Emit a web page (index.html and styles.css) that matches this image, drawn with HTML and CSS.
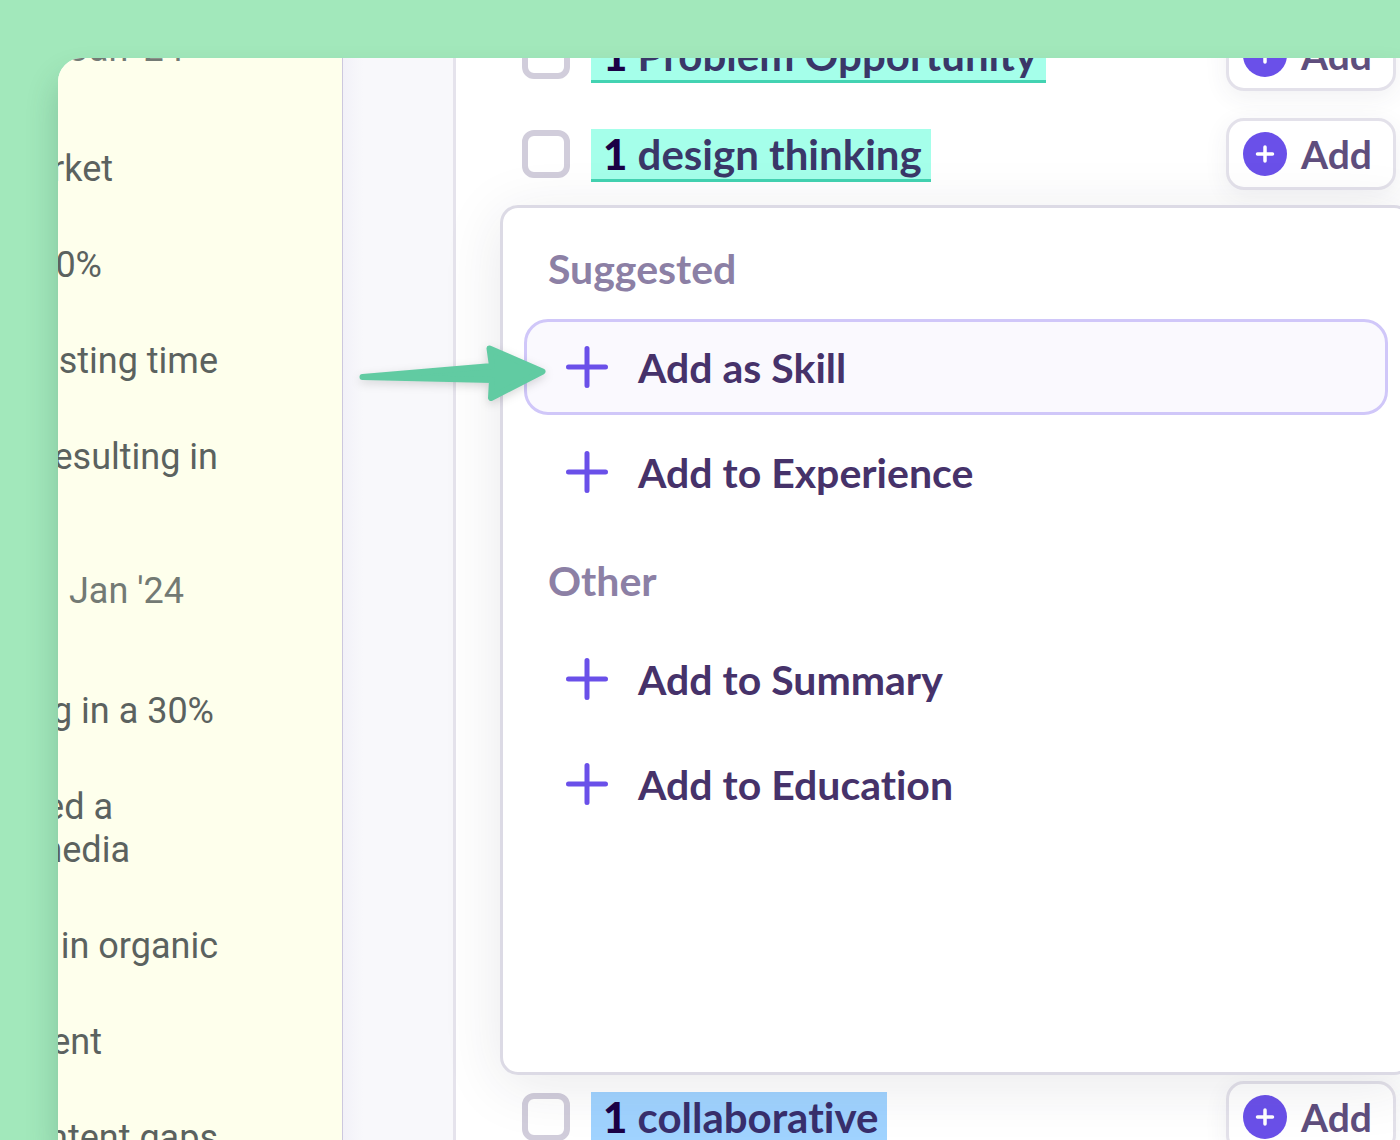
FILE: index.html
```
<!DOCTYPE html>
<html lang="en">
<head>
    <meta charset="UTF-8">
    <title>Resume keywords</title>
    <link rel="stylesheet" href="styles.css">
</head>
<body>
    <main class="frame">
        <!-- Resume preview -->
        <section class="resume">
            <p class="line date end-date">Jan '24</p>
            <ul class="bullets">
                <li class="line end-word">rket</li>
                <li class="line end-short">0%</li>
                <li class="line">sting time</li>
                <li class="line">esulting in</li>
            </ul>
            <p class="line date end-date">Jan '24</p>
            <ul class="bullets">
                <li class="line end-percent">g in a 30%</li>
                <li>
                    <span class="line end-word">ed a</span>
                    <span class="line end-media">media</span>
                </li>
                <li class="line">in organic</li>
                <li class="line end-short">ent</li>
                <li class="line">ntent gaps</li>
            </ul>
        </section>

        <div class="gutter"></div>

        <!-- Keyword list -->
        <section class="keywords">
            <div class="keyword-row">
                <input type="checkbox" id="kw-problem" class="check">
                <label for="kw-problem" class="keyword"><b>1</b> Problem Opportunity</label>
                <button type="button" class="add-button">
                    <svg class="add-icon" viewBox="0 0 44 44"><circle cx="22" cy="22" r="22"/><path d="M22 15v14M14.500 22h15"/></svg>
                    Add
                </button>
            </div>
            <div class="keyword-row">
                <input type="checkbox" id="kw-design" class="check">
                <label for="kw-design" class="keyword"><b>1</b> design thinking</label>
                <button type="button" class="add-button">
                    <svg class="add-icon" viewBox="0 0 44 44"><circle cx="22" cy="22" r="22"/><path d="M22 15v14M14.500 22h15"/></svg>
                    Add
                </button>
            </div>

            <!-- Add menu -->
            <div class="menu">
                <div class="menu-group">
                    <h2 class="menu-title">Suggested</h2>
                    <button type="button" class="menu-item active">
                        <svg class="plus" viewBox="0 0 42 42"><path d="M21 2.500v37M2.500 21h37"/></svg>
                        Add as Skill
                    </button>
                    <button type="button" class="menu-item">
                        <svg class="plus" viewBox="0 0 42 42"><path d="M21 2.500v37M2.500 21h37"/></svg>
                        Add to Experience
                    </button>
                </div>
                <div class="menu-group">
                    <h2 class="menu-title">Other</h2>
                    <button type="button" class="menu-item">
                        <svg class="plus" viewBox="0 0 42 42"><path d="M21 2.500v37M2.500 21h37"/></svg>
                        Add to Summary
                    </button>
                    <button type="button" class="menu-item">
                        <svg class="plus" viewBox="0 0 42 42"><path d="M21 2.500v37M2.500 21h37"/></svg>
                        Add to Education
                    </button>
                </div>
            </div>

            <div class="keyword-row">
                <input type="checkbox" id="kw-collab" class="check">
                <label for="kw-collab" class="keyword soft"><b>1</b> collaborative</label>
                <button type="button" class="add-button">
                    <svg class="add-icon" viewBox="0 0 44 44"><circle cx="22" cy="22" r="22"/><path d="M22 15v14M14.500 22h15"/></svg>
                    Add
                </button>
            </div>
        </section>

        <!-- Pointer to the first menu entry -->
        <svg class="arrow" viewBox="0 0 200 72" width="200" height="72">
            <path d="M9.500 37 L139 26 L136.500 8.500 L189.500 31.500 L138 58 L139 40 Z"/>
        </svg>
    </main>
</body>
</html>
```

FILE: styles.css
```
:root {
    --green: #a2e8bb;
    --arrow: #61cba2;
    --purple: #6a50e9;
    --ink: #46326a;
    --border: #dcdae5;
}

* {
    box-sizing: border-box;
}

body {
    margin: 0;
    height: 100vh;
    padding: 58px 0 0 58px;
    overflow: hidden;
    background: var(--green);
    font-family: Lato, sans-serif;
}

.frame {
    position: relative;
    display: flex;
    height: 100%;
    overflow: hidden;
    background: #fff;
    border-radius: 24px 0 0 0;
    box-shadow: 0 20px 32px rgba(30, 70, 60, 0.24);
}

/* Resume preview */
.resume {
    flex: 0 0 284px;
    margin-top: -30px;
    background: #feffec;
    color: #5b625f;
    font-family: Roboto, sans-serif;
    font-size: 36px;
    line-height: 43px;
}

.line {
    display: flex;
    justify-content: flex-end;
    width: 160px;
    margin: 0;
    white-space: nowrap;
}

.date {
    color: #737a74;
}

.bullets {
    display: flex;
    flex-direction: column;
    gap: 53px;
    margin: 77px 0 91px;
    padding: 0;
    list-style: none;
}

.end-percent { width: 156px; }
.end-date { width: 126px; }
.end-media { width: 72px; }
.end-word { width: 55px; }
.end-short { width: 44px; }

.gutter {
    flex: 0 0 111px;
    border-left: 1px solid #cdc8de;
    background: linear-gradient(to right, #f2f1f8, #f8f8fb 20px);
}

/* Keyword list */
.keywords {
    flex: 1;
    min-width: 0;
    margin-top: -39px;
    padding: 0 4px 0 66px;
    border-left: 3px solid #e5e3ec;
}

.keyword-row {
    display: flex;
    align-items: center;
    height: 72px;
}

.keyword-row + .keyword-row {
    margin-top: 27px;
}

.check {
    appearance: none;
    width: 48px;
    height: 48px;
    margin: 0 21px 0 0;
    border: 6px solid #d1cddb;
    border-radius: 12px;
    background: #fff;
}

.keyword,
.menu-item {
    font-feature-settings: "liga" 0, "clig" 0, "dlig" 0, "calt" 0, "ccmp" 0, "locl" 0;
}

.keyword {
    margin-top: 3px;
    padding: 0 9px 0 12px;
    border-bottom: 3px solid #43d3b2;
    background: #a5ffea;
    color: #3a3768;
    font-size: 42px;
    font-weight: 700;
    line-height: 50px;
    white-space: nowrap;
}

.keyword b {
    color: #1b0046;
    font-weight: 900;
}

.keyword.soft {
    border-color: #6bb2f0;
    background: #a0d3ff;
    color: #382f6c;
}

.add-button {
    display: flex;
    align-items: center;
    gap: 14px;
    width: 170px;
    height: 72px;
    margin-left: auto;
    padding: 0 14px;
    border: 3px solid #e3e1ea;
    border-radius: 18px;
    background: #fff;
    box-shadow: 0 6px 24px rgba(60, 50, 90, 0.07);
    color: #5f4e7d;
    font-family: inherit;
    font-size: 39px;
    font-weight: 700;
}

.add-icon {
    width: 44px;
    height: 44px;
    fill: var(--purple);
    stroke: none;
}

.add-icon path {
    stroke: #fff;
    stroke-width: 3.5;
    stroke-linecap: round;
}

/* Add menu */
.menu {
    position: relative;
    display: flex;
    flex-direction: column;
    gap: 36px;
    min-height: 870px;
    margin: 15px -16px 6px -22px;
    padding: 36px 21px;
    border: 3px solid var(--border);
    border-radius: 18px;
    background: #fff;
    box-shadow: 0 10px 60px rgba(40, 35, 60, 0.1);
}

.menu-group {
    display: flex;
    flex-direction: column;
    gap: 9px;
}

.menu-title {
    margin: 0 0 16px;
    padding-left: 24px;
    color: #8c80a5;
    font-size: 41px;
    font-weight: 700;
    line-height: 50px;
}

.menu-item {
    display: flex;
    align-items: center;
    gap: 30px;
    height: 96px;
    padding: 0 39px;
    border: 3px solid transparent;
    border-radius: 24px;
    background: none;
    color: var(--ink);
    font-family: inherit;
    font-size: 41px;
    font-weight: 700;
}

.menu-item.active {
    border-color: #d0c7f9;
    background: #faf9fe;
}

.plus {
    width: 42px;
    height: 42px;
    fill: none;
    stroke: var(--purple);
    stroke-width: 5;
    stroke-linecap: round;
}

.arrow {
    position: absolute;
    left: 295px;
    top: 282px;
    fill: var(--arrow);
    stroke: var(--arrow);
    stroke-width: 6;
    stroke-linejoin: round;
    filter: drop-shadow(0 3px 5px rgba(0, 0, 0, 0.15));
}
```
